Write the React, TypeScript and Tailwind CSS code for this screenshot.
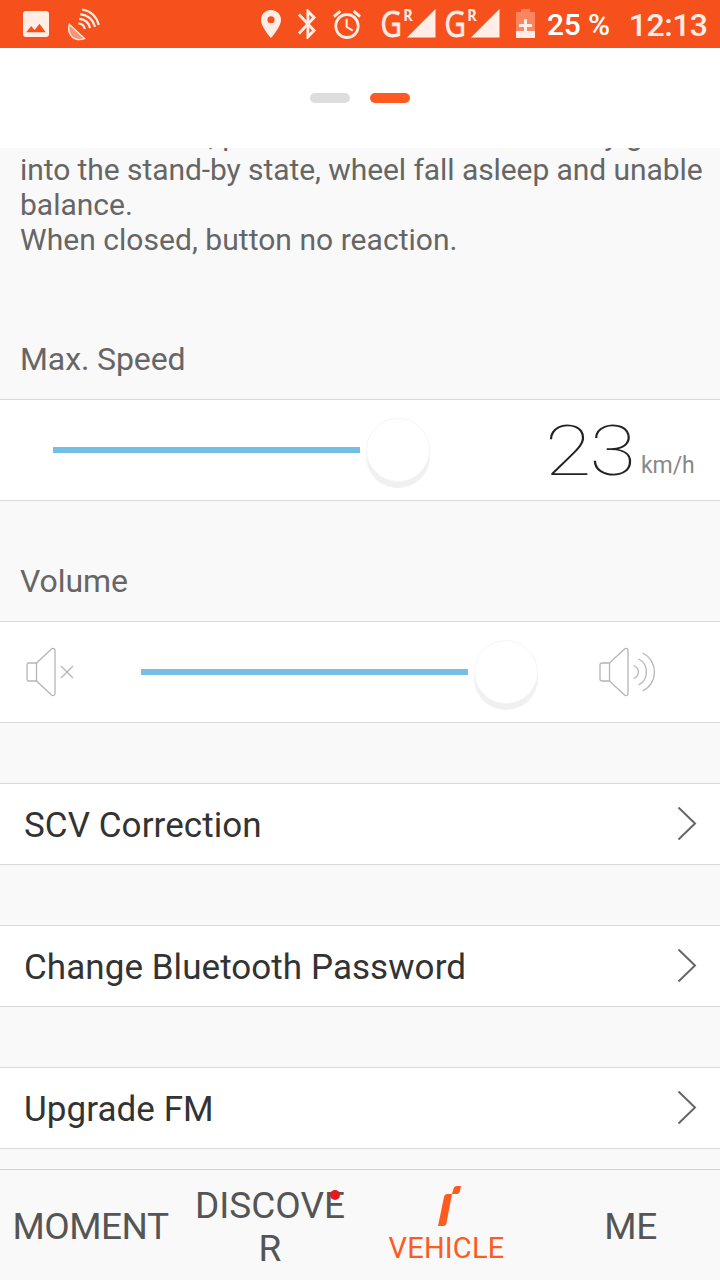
import type { ReactNode } from 'react';

const menuItems = ['SCV Correction', 'Change Bluetooth Password', 'Upgrade FM'];

function SignalIcon() {
  return (
    <svg className="overflow-visible" width="55" height="48" viewBox="0 0 55 48" fill="#ffede6">
      <text x="-0.5" y="37.2" fontSize="37" fontFamily="Open Sans" stroke="#ffede6" strokeWidth="0.8" textLength="21.5" lengthAdjust="spacingAndGlyphs">G</text>
      <text x="22.2" y="21.300" fontSize="15.5" fontWeight="700" fontFamily="Open Sans" textLength="9.5" lengthAdjust="spacingAndGlyphs">R</text>
      <path d="M54.5 9v28.5H26z" />
    </svg>
  );
}

function StatusBar() {
  return (
    <div className="flex h-12 items-start bg-[#f6511d] pl-[23px] text-[#ffede6]">
      <svg className="mt-[11px]" width="26" height="26" viewBox="0 0 26 26">
        <rect width="26" height="26" rx="3" fill="#ffede6" />
        <path d="M3.3 21.3l4.9-6.2 3.4 4 4.9-6.3 6.3 8.5z" fill="#f6511d" />
      </svg>
      <svg className="mt-2 ml-[18px]" width="34" height="34" viewBox="0 0 34 34" fill="none" stroke="#ffede6">
        <path d="M2.3 16.2l15.2 14.4C11 32.8 5.5 31 3.2 26.5 1.5 23.3 1.2 19.5 2.3 16.2z" fill="#fa9474" strokeWidth="1.3" />
        <path d="M11.5 15.5c3.6.3 5.7 2.2 6.3 5.5M12.3 10.8c5.6.6 9.7 4 10.8 9.3M13.2 6.2c7.8 1 12.9 5.7 14.8 12.5M15.2 1.5c8.7 1.7 14.6 7.2 16.5 15.5" strokeWidth="2.2" />
      </svg>
      <svg className="mt-[10px] ml-[160px]" width="20" height="28" viewBox="5 2 14 20" preserveAspectRatio="none" fill="currentColor">
        <path d="M12 2C8.13 2 5 5.13 5 9c0 5.25 7 13 7 13s7-7.75 7-13c0-3.87-3.13-7-7-7zm0 9.5a2.5 2.5 0 1 1 0-5 2.5 2.5 0 0 1 0 5z" />
      </svg>
      <svg className="mt-[9px] ml-[17px]" width="18" height="30" viewBox="5 2 12.71 20" preserveAspectRatio="none" fill="currentColor">
        <path d="M17.71 7.71L12 2h-1v7.59L6.41 5 5 6.41 10.59 12 5 17.59 6.41 19 11 14.41V22h1l5.71-5.71-4.3-4.29 4.3-4.29zM13 5.83l1.88 1.88L13 9.59V5.83zm1.88 10.46L13 18.17v-3.76l1.88 1.88z" />
      </svg>
      <svg className="mt-[10px] ml-[17px]" width="28" height="29" viewBox="2 1.86 20 20.14" preserveAspectRatio="none" fill="currentColor">
        <path d="M22 5.72l-4.6-3.86-1.29 1.53 4.6 3.86L22 5.72zM7.88 3.39L6.6 1.86 2 5.71l1.29 1.53 4.59-3.85zM12.5 8H11v6l4.75 2.85.75-1.23-4-2.37V8zM12 4c-4.97 0-9 4.03-9 9s4.02 9 9 9c4.97 0 9-4.03 9-9s-4.03-9-9-9zm0 16c-3.87 0-7-3.13-7-7s3.13-7 7-7 7 3.13 7 7-3.13 7-7 7z" />
      </svg>
      <div className="ml-5 flex gap-[9px]">
        <SignalIcon />
        <SignalIcon />
      </div>
      <svg className="mt-[9px] ml-4" width="19" height="29" viewBox="0 0 19 29">
        <path d="M5 0h9v3h5v19H0V3h5z" fill="#fa8560" />
        <path d="M0 22h19v7H0zM8 10h3v5h5v3h-5v5H8v-5H3v-3h5z" fill="#ffede6" />
      </svg>
      <span className="ml-3 pt-[7px] text-[30px] leading-[35px] font-medium tracking-[-0.2px] whitespace-nowrap text-white">25 %</span>
      <span className="ml-[19px] pt-[6px] text-[32px] leading-[38px] font-medium tracking-[-0.5px]">12:13</span>
    </div>
  );
}

function SectionLabel({ children }: { children: ReactNode }) {
  return <h2 className="pl-5 text-[32px] leading-[38px] tracking-[-0.1px] text-[#666]">{children}</h2>;
}

function Thumb() {
  return (
    <div className="ml-[6px] h-16 w-16 shrink-0 rounded-full border border-[#f6f6f6] bg-white shadow-[0_6px_1px_#f0f0f0]"></div>
  );
}

function Speaker() {
  return (
    <>
      <path d="M10.5 16H3a2 2 0 0 0-2 2v14a2 2 0 0 0 2 2h7.5z" />
      <path d="M10.5 16L25.5 2c1.800-1.300 3.500-.3 3.500 1.500v43c0 2-2 2.800-3.500 1.500l-15-14" />
    </>
  );
}

export default function App() {
  return (
    <div className="flex h-[1280px] w-[720px] flex-col overflow-hidden bg-[#f9f9f9] font-['Roboto',sans-serif]">
      <StatusBar />

      {/* Page indicator */}
      <header className="flex h-[100px] shrink-0 items-center justify-center gap-5 bg-white">
        <div className="h-[10px] w-10 rounded-full bg-[#ddd]"></div>
        <div className="h-[10px] w-10 rounded-full bg-[#ff5a1f]"></div>
      </header>

      {/* Scrolled settings */}
      <main className="h-[1021px] overflow-hidden">
        <div className="-mt-[31px] h-[223px] pl-5 text-[30px] leading-[35px] whitespace-nowrap text-[#666]">
          <p>When enabled, press a button to immediately go</p>
          <p className="tracking-[-0.07px]">into the stand-by state, wheel fall asleep and unable</p>
          <p>balance.</p>
          <p className="tracking-[0.04px]">When closed, button no reaction.</p>
        </div>

        <SectionLabel>Max. Speed</SectionLabel>
        <section className="mt-[21px] flex h-[102px] items-center border-y border-[#d9d9d9] bg-white pl-[53px]">
          <div className="h-[6px] w-[307px] bg-[#74bfe6]"></div>
          <Thumb />
          <div className="ml-[115px] flex items-end">
            <span className="w-[96px] origin-left scale-x-[1.21] pt-[2px] text-[70px] leading-[82px] font-thin tracking-[-1.5px] text-[#222]">23</span>
            <span className="pb-[8px] text-[23px] leading-[36px] tracking-[-0.1px] text-[#888]">km/h</span>
          </div>
        </section>

        <div className="pt-[61px]">
          <SectionLabel>Volume</SectionLabel>
        </div>
        <section className="mt-[21px] flex h-[102px] items-center border-y border-[#d9d9d9] bg-white pl-[26px]">
          <svg width="50" height="50" viewBox="0 0 50 50" fill="none" stroke="#b5b5b5" strokeWidth="1.3">
            <Speaker />
            <path d="M35 19l12 12M47 19L35 31" />
          </svg>
          <div className="ml-[65px] h-[6px] w-[327px] bg-[#74bfe6]"></div>
          <Thumb />
          <svg className="ml-[61px]" width="60" height="50" viewBox="0 0 60 50" fill="none" stroke="#b5b5b5" strokeWidth="1.3">
            <Speaker />
            <path d="M34.5 18.5c6.5 2.5 6.500 10.500 0 13M39.500 12c10.500 5 10.500 21 0 26M43.500 6c16 7.500 16 30.500 0 38" />
          </svg>
        </section>

        <nav className="mt-[60px] flex flex-col gap-[60px]">
          {menuItems.map((item) => (
            <a key={item} className="flex h-[82px] items-center justify-between border-y border-[#d9d9d9] bg-white pr-[23px] pl-6 text-[35px] tracking-[0.06px] text-[#333]">
              <span className="pt-[5px]">{item}</span>
              <svg width="20" height="34" viewBox="0 0 20 34" fill="none" stroke="#666" strokeWidth="2">
                <path d="M1.5 0.500l16.500 16L1.500 32.500" />
              </svg>
            </a>
          ))}
        </nav>
      </main>

      {/* Bottom tabs */}
      <footer className="grid h-[111px] grid-cols-4 items-center border-t border-[#d2d2d2] pt-[2px] text-center text-[37px] leading-[43px] text-[#555]">
        <div className="pl-px tracking-[-0.5px]">MOMENT</div>
        <div className="relative pt-[2px]">
          DISCOVE
          <br />
          R
          <span className="absolute top-[8px] left-[150px] h-[10px] w-[10px] rounded-full bg-[#e8191c]"></span>
        </div>
        <div className="flex flex-col items-center text-[29px] leading-[34px] tracking-[0.2px] text-[#ff5a1f]">
          <svg className="-mt-px mb-[5px]" width="24" height="40" viewBox="0 0 24 40" fill="currentColor">
            <path d="M0 40L6 11q.5-3 3.500-3H14L8.500 37q-.5 3-3.500 3zM14 8l1.500-5q.7-3 3.500-3h4l-1 5q-.5 3-3.500 3z" />
          </svg>
          <span className="pr-[7px]">VEHICLE</span>
        </div>
        <div className="pl-px tracking-[-0.5px]">ME</div>
      </footer>
    </div>
  );
}
